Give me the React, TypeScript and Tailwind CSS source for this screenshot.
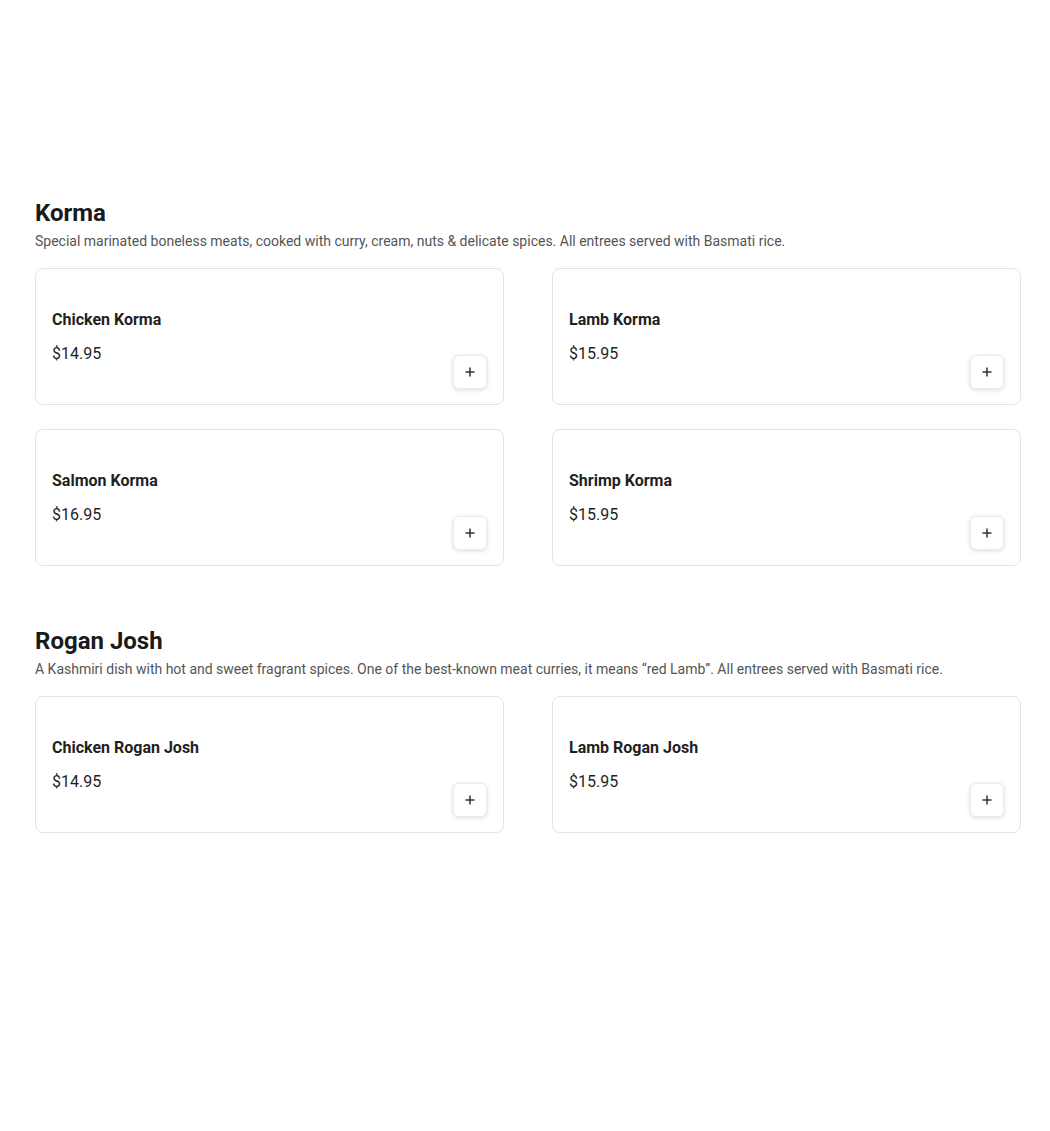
import React from 'react';

interface Dish {
  name: string;
  price: string;
}

interface Section {
  title: string;
  description: string;
  dishes: Dish[];
}

const sections: Section[] = [
  {
    title: 'Korma',
    description:
      'Special marinated boneless meats, cooked with curry, cream, nuts & delicate spices. All entrees served with Basmati rice.',
    dishes: [
      { name: 'Chicken Korma', price: '$14.95' },
      { name: 'Lamb Korma', price: '$15.95' },
      { name: 'Salmon Korma', price: '$16.95' },
      { name: 'Shrimp Korma', price: '$15.95' },
    ],
  },
  {
    title: 'Rogan Josh',
    description:
      'A Kashmiri dish with hot and sweet fragrant spices. One of the best-known meat curries, it means \u201cred Lamb\u201d. All entrees served with Basmati rice.',
    dishes: [
      { name: 'Chicken Rogan Josh', price: '$14.95' },
      { name: 'Lamb Rogan Josh', price: '$15.95' },
    ],
  },
];

const PlusIcon = () => (
  <svg width="10" height="10" viewBox="0 0 10 10" fill="none">
    <path d="M5 0.5v9M0.5 5h9" stroke="#333" strokeWidth="1.5" />
  </svg>
);

const DishCard: React.FC<{ dish: Dish }> = ({ dish }) => (
  <div className="h-[137px] rounded-lg border border-[#e3e3e3] bg-white p-4 flex">
    <div className="flex-1 flex flex-col justify-center gap-[10px]">
      <div className="text-base leading-6 font-bold text-[#1f1f1f]">{dish.name}</div>
      <div className="text-base leading-6 text-[#1f1f1f]">{dish.price}</div>
    </div>
    <button
      aria-label={`Add ${dish.name}`}
      className="self-end -mb-px w-[34px] h-[34px] rounded-md bg-white border border-[#ececec] shadow-[0_1px_4px_rgba(0,0,0,0.15)] flex items-center justify-center"
    >
      <PlusIcon />
    </button>
  </div>
);

export default function App() {
  return (
    <div
      className="min-h-[1131px] bg-white px-[35px] pt-[197px] pb-16"
      style={{ fontFamily: 'Roboto, "Liberation Sans", sans-serif' }}
    >
      {sections.map((s, i) => (
        <section key={s.title} className={i > 0 ? 'mt-[59px]' : ''}>
          <h2 className="text-2xl leading-8 font-bold text-[#1a1a1a]">{s.title}</h2>
          <p className="mt-[2px] text-sm leading-5 text-[#555]">{s.description}</p>
          <div className="mt-[17px] grid grid-cols-2 gap-x-[48px] gap-y-6 w-[986px]">
            {s.dishes.map((d) => (
              <DishCard key={d.name} dish={d} />
            ))}
          </div>
        </section>
      ))}
    </div>
  );
}
